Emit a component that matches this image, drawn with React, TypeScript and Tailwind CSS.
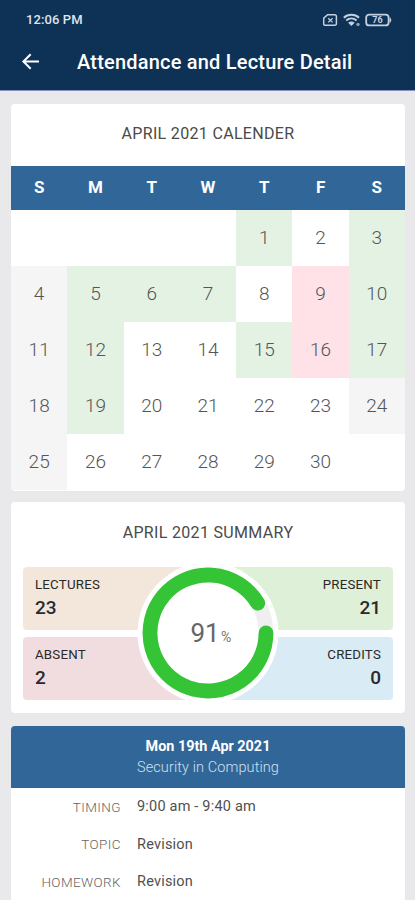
import { clsx } from 'clsx'

type DayStatus = 'present' | 'absent' | 'holiday'

const WEEKDAYS = ['S', 'M', 'T', 'W', 'T', 'F', 'S']

// April 2021 starts on a Thursday
const FIRST_WEEKDAY = 4
const DAYS_IN_MONTH = 30

const STATUS: Record<number, DayStatus> = {
  1: 'present',
  3: 'present',
  4: 'holiday',
  5: 'present',
  6: 'present',
  7: 'present',
  9: 'absent',
  10: 'present',
  11: 'holiday',
  12: 'present',
  15: 'present',
  16: 'absent',
  17: 'present',
  18: 'holiday',
  19: 'present',
  24: 'holiday',
  25: 'holiday',
}

const DETAILS = [
  { label: 'TIMING', value: '9:00 am - 9:40 am' },
  { label: 'TOPIC', value: 'Revision' },
  { label: 'HOMEWORK', value: 'Revision' },
]

function StatusIcons() {
  return (
    <svg className="h-[14px] w-[70px]" viewBox="0 0 70 14" fill="none" stroke="#c3d0e0" strokeWidth={1.5}>
      {/* SIM */}
      <path d="M4.6 1.7h7.2a1.6 1.6 0 0 1 1.6 1.6v7.4a1.6 1.6 0 0 1-1.6 1.6H2.1a1.4 1.4 0 0 1-1.4-1.4V5.2z" />
      <path d="m5.2 5.2 4.4 4.2m0-4.2L5.2 9.4" strokeWidth={1.3} />
      {/* Wifi */}
      <path d="M20.8 4.7c4.1-3.9 11.1-3.9 15.2 0M23.2 7.5c3.1-2.7 7.3-2.7 10.4 0" strokeWidth={2} />
      <path d="M25.1 9.7c2-1.7 4.6-1.7 6.6 0l-3.3 3.4z" fill="#c3d0e0" stroke="none" />
      <circle cx="35" cy="11.4" r="1.7" fill="#8da3bd" stroke="none" />
      {/* Battery */}
      <rect x="43.2" y="1.6" width="22.4" height="10.8" rx="3" strokeWidth={1.8} />
      <path d="M66.6 4.2c2.2.9 2.2 4.7 0 5.6z" fill="#c3d0e0" stroke="none" />
      <text x="54.4" y="10.2" textAnchor="middle" fill="#c3d0e0" stroke="none" className="text-[9px] font-bold">
        76
      </text>
    </svg>
  )
}

function Header() {
  return (
    <header className="h-[91px] shrink-0 border-b border-[#8b8fbb] bg-[#0e3156] text-white">
      <div className="flex h-10 items-center justify-between pr-[22px] pl-[26px]">
        <span className="text-[13px] font-medium tracking-[0.1px] text-[#dde5ee]">12:06 PM</span>
        <StatusIcons />
      </div>
      <div className="flex h-11 items-center pl-[21px]">
        <svg className="h-[18px] w-[19px]" viewBox="0 0 19 18" fill="none" stroke="currentColor" strokeWidth={2}>
          <path d="M18 8.5H2.4M9.7 1.2 2.4 8.5l7.3 7.3" />
        </svg>
        <h1 className="ml-[37px] text-[20px] font-medium tracking-[0.2px] whitespace-nowrap">
          Attendance and Lecture Detail
        </h1>
      </div>
    </header>
  )
}

function Calendar() {
  const blanks = Array.from({ length: FIRST_WEEKDAY })
  const days = Array.from({ length: DAYS_IN_MONTH }, (_, i) => i + 1)

  return (
    <section className="h-[387px] shrink-0 overflow-hidden rounded bg-white">
      <h2 className="flex h-[62px] items-center justify-center pb-[2px] text-[16px] tracking-[0.33px] text-[#4a4a4a]">
        APRIL 2021 CALENDER
      </h2>
      <div className="grid h-11 grid-cols-7 items-center bg-[#316698] text-center text-[17px] font-bold text-white">
        {WEEKDAYS.map((d, i) => (
          <span key={i}>{d}</span>
        ))}
      </div>
      <div className="grid auto-rows-[56px] grid-cols-7">
        {blanks.map((_, i) => (
          <span key={`blank-${i}`} />
        ))}
        {days.map((day) => (
          <span
            key={day}
            className={clsx(
              'flex items-center justify-center pt-px text-[19px] font-light text-[#555]',
              STATUS[day] === 'present' && 'bg-[#e4f2e4]',
              STATUS[day] === 'absent' && 'bg-[#ffe2e7]',
              STATUS[day] === 'holiday' && 'bg-[#f5f5f5]'
            )}
          >
            {day}
          </span>
        ))}
      </div>
    </section>
  )
}

interface StatProps {
  label: string
  value: number
  className: string
}

function Stat({ label, value, className }: StatProps) {
  return (
    <div className={clsx('flex h-[63px] flex-col px-3 pt-2', className)}>
      <span className="text-[13.3px] leading-[20px] tracking-[0.2px]">{label}</span>
      <span className="text-[19px] leading-[26px] font-medium">{value}</span>
    </div>
  )
}

function Summary() {
  return (
    <section className="h-[211px] shrink-0 rounded bg-white px-3">
      <h2 className="flex h-[65px] items-center justify-center pb-[3px] text-[16px] tracking-[0.33px] text-[#4a4a4a]">
        APRIL 2021 SUMMARY
      </h2>
      <div className="relative grid grid-cols-2 gap-y-[7px] text-[#292929]">
        <Stat label="LECTURES" value={23} className="rounded-l bg-[#f2e7da]" />
        <Stat label="PRESENT" value={21} className="items-end rounded-r bg-[#dff0d8]" />
        <Stat label="ABSENT" value={2} className="rounded-l bg-[#f1dde0]" />
        <Stat label="CREDITS" value={0} className="items-end rounded-r bg-[#d9ebf5]" />

        {/* Attendance ring */}
        <div className="absolute inset-0 flex items-center justify-center pb-px">
          <svg className="h-[142px] w-[142px] shrink-0" viewBox="-71 -71 142 142" fill="none">
            <circle r="70.5" fill="#fff" />
            <circle r="58" stroke="#efefef" strokeWidth="14.5" />
            <path
              d="M58 0A58 58 0 1 1 49.7 -29.9"
              stroke="#35c435"
              strokeWidth="14.8"
              strokeLinecap="round"
            />
            <text x="-17.5" y="9" fill="#666" className="text-[26px]">
              91
            </text>
            <text x="13" y="9" fill="#777" className="text-[14px]">
              %
            </text>
          </svg>
        </div>
      </div>
    </section>
  )
}

function LectureCard() {
  return (
    <section className="h-[220px] shrink-0 overflow-hidden rounded bg-white">
      <div className="flex h-[62px] flex-col items-center justify-center bg-[#316698]">
        <span className="text-[14.4px] leading-[21px] font-bold text-white">Mon 19th Apr 2021</span>
        <span className="text-[14.5px] leading-[21px] font-light tracking-[0.1px] text-[#d2e0ee]">
          Security in Computing
        </span>
      </div>
      <dl>
        {DETAILS.map(({ label, value }) => (
          <div key={label} className="flex h-[37.7px] items-center">
            <dt className="w-[110px] text-right text-[13.5px] font-light tracking-[0.4px] text-[#666]">{label}</dt>
            <dd className="ml-4 text-[14.5px] tracking-[0.2px] text-[#505050]">{value}</dd>
          </div>
        ))}
      </dl>
    </section>
  )
}

export default function App() {
  return (
    <div className="flex h-screen w-full flex-col overflow-hidden bg-[#e9e9ec] font-[Roboto,sans-serif]">
      <Header />
      <main className="flex flex-col pt-[13px] pr-[10px] pl-[11px]">
        <Calendar />
        <div className="h-[11px] shrink-0" />
        <Summary />
        <div className="h-[13px] shrink-0" />
        <LectureCard />
      </main>
    </div>
  )
}
